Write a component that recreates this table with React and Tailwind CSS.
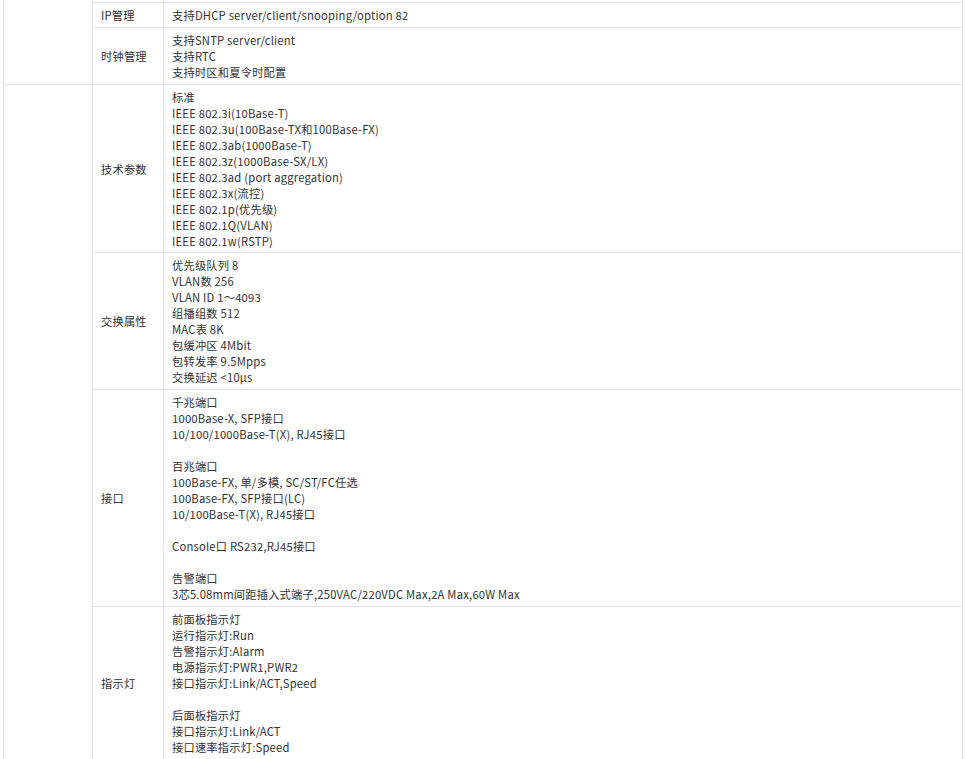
const rows = [
  { label: "IP管理", lines: ["支持DHCP server/client/snooping/option 82"] },
  { label: "时钟管理", lines: ["支持SNTP server/client", "支持RTC", "支持时区和夏令时配置"] },
];

const rows2 = [
  {
    label: "技术参数",
    tight: true,
    lines: [
      "标准",
      "IEEE 802.3i(10Base-T)",
      "IEEE 802.3u(100Base-TX和100Base-FX)",
      "IEEE 802.3ab(1000Base-T)",
      "IEEE 802.3z(1000Base-SX/LX)",
      "IEEE 802.3ad (port aggregation)",
      "IEEE 802.3x(流控)",
      "IEEE 802.1p(优先级)",
      "IEEE 802.1Q(VLAN)",
      "IEEE 802.1w(RSTP)",
    ],
  },
  {
    label: "交换属性",
    lines: [
      "优先级队列 8",
      "VLAN数 256",
      "VLAN ID 1～4093",
      "组播组数 512",
      "MAC表 8K",
      "包缓冲区 4Mbit",
      "包转发率 9.5Mpps",
      "交换延迟 <10μs",
    ],
  },
  {
    label: "接口",
    lines: [
      "千兆端口",
      "1000Base-X, SFP接口",
      "10/100/1000Base-T(X), RJ45接口",
      "",
      "百兆端口",
      "100Base-FX, 单/多模, SC/ST/FC任选",
      "100Base-FX, SFP接口(LC)",
      "10/100Base-T(X), RJ45接口",
      "",
      "Console口 RS232,RJ45接口",
      "",
      "告警端口",
      "3芯5.08mm间距插入式端子,250VAC/220VDC Max,2A Max,60W Max",
    ],
  },
  {
    label: "指示灯",
    lines: [
      "前面板指示灯",
      "运行指示灯:Run",
      "告警指示灯:Alarm",
      "电源指示灯:PWR1,PWR2",
      "接口指示灯:Link/ACT,Speed",
      "",
      "后面板指示灯",
      "接口指示灯:Link/ACT",
      "接口速率指示灯:Speed",
    ],
  },
];

const cell = "border border-[#e3e3e3] px-2 py-1 align-middle";
const tightCell = "border border-[#e3e3e3] px-2 pt-1 pb-[3px] align-middle";

function Lines({ lines }) {
  return lines.map((l, i) => (
    <div key={i} className="h-4 whitespace-nowrap">
      {l}
    </div>
  ));
}

export default function App() {
  return (
    <div className="h-[759px] overflow-hidden bg-white font-['Noto_Sans_CJK_SC','Noto_Sans',sans-serif] text-[11.25px] leading-4 tracking-[0.2px] text-[#333]">
      <table className="ml-[3px] mt-[-22px] w-[960px] table-fixed border-collapse">
        <colgroup>
          <col className="w-[89px]" />
          <col className="w-[71px]" />
          <col />
        </colgroup>
        <tbody>
          <tr>
            <td className={cell} rowSpan={3}></td>
            <td className={cell + " h-[24px]"}></td>
            <td className={cell}></td>
          </tr>
          {rows.map((r) => (
            <tr key={r.label}>
              <td className={cell}>{r.label}</td>
              <td className={cell}>
                <Lines lines={r.lines} />
              </td>
            </tr>
          ))}
          {rows2.map((r, i) => (
            <tr key={r.label}>
              {i === 0 && <td className={cell} rowSpan={rows2.length}></td>}
              <td className={r.tight ? tightCell : cell}>{r.label}</td>
              <td className={r.tight ? tightCell : cell}>
                <Lines lines={r.lines} />
              </td>
            </tr>
          ))}
        </tbody>
      </table>
    </div>
  );
}
